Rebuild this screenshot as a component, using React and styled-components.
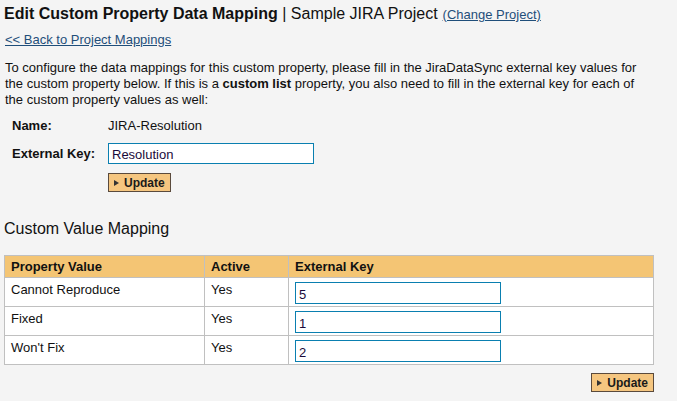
import React from 'react';
import styled, { createGlobalStyle } from 'styled-components';

const GlobalStyle = createGlobalStyle`
  body {
    margin: 0;
    background: #f4f4f4;
    font-family: Arial, "Liberation Sans", sans-serif;
    color: #111;
  }
`;

const Page = styled.div`
  padding: 3px 24px 0 4px;
  font-size: 13px;
`;

const Title = styled.h1`
  margin: 0;
  font-size: 16px;
  font-weight: normal;
  line-height: 22px;
  b {
    font-weight: bold;
  }
`;

const SmallLink = styled.a`
  font-size: 13px;
  color: #1f4e7a;
  margin-left: 5px;
  text-decoration: underline;
`;

const BackLink = styled.a`
  display: inline-block;
  margin-top: 6px;
  font-size: 13px;
  color: #1f4e7a;
  text-decoration: underline;
  margin-left: 1px;
`;

const Intro = styled.p`
  margin: 13px 0 0 1px;
  line-height: 16px;
  color: #111;
  b {
    font-weight: bold;
  }
`;

const Form = styled.div`
  display: grid;
  grid-template-columns: 96px auto;
  row-gap: 9px;
  padding-left: 8px;
  margin-top: 10px;
  align-items: start;
`;

const Label = styled.div`
  font-weight: bold;
  line-height: 16px;
  padding-top: ${p => (p.$input ? '3px' : '0')};
`;

const Value = styled.div`
  line-height: 16px;
`;

const Input = styled.input`
  box-sizing: border-box;
  width: ${p => p.$w || 206}px;
  height: ${p => p.$h || 21}px;
  border: 1px solid #0a7fb0;
  background: #fff;
  font-family: Arial, "Liberation Sans", sans-serif;
  font-size: 13px;
  color: #1a0a3a;
  padding: 2px 3px 0;
  outline: none;
`;

const Button = styled.button`
  box-sizing: border-box;
  display: inline-flex;
  align-items: center;
  gap: 5px;
  height: 19px;
  padding: 0 5px 0 5px;
  background: #f5c680;
  border: 1px solid #5a4a3c;
  font-family: Arial, "Liberation Sans", sans-serif;
  font-weight: bold;
  font-size: 12px;
  color: #1a1a1a;
  cursor: pointer;
  &::before {
    content: '';
    border-left: 5px solid #333;
    border-top: 3px solid transparent;
    border-bottom: 3px solid transparent;
  }
`;

const SectionTitle = styled.h2`
  margin: 27px 0 0;
  font-size: 16px;
  font-weight: normal;
  line-height: 20px;
`;

const Table = styled.table`
  margin-top: 16px;
  width: 650px;
  border-collapse: collapse;
  border: 1px solid #c0c0c0;
  background: #fff;
  th {
    background: #f4c574;
    text-align: left;
    font-weight: bold;
    height: 21px;
    padding: 0 6px;
    border: 1px solid #c0c0c0;
  }
  td {
    vertical-align: top;
    height: 29px;
    padding: 4px 6px 0;
    box-sizing: border-box;
    border: 1px solid #c0c0c0;
    line-height: 16px;
  }
`;

const Footer = styled.div`
  width: 650px;
  display: flex;
  justify-content: flex-end;
  margin-top: 8px;
`;

const rows = [
  { name: 'Cannot Reproduce', active: 'Yes', key: '5' },
  { name: 'Fixed', active: 'Yes', key: '1' },
  { name: "Won't Fix", active: 'Yes', key: '2' },
];

export default function App() {
  return (
    <Page>
      <GlobalStyle />
      <Title>
        <b>Edit Custom Property Data Mapping</b> | Sample JIRA Project
        <SmallLink href="#">(Change Project)</SmallLink>
      </Title>
      <BackLink href="#">&lt;&lt; Back to Project Mappings</BackLink>
      <Intro>
        To configure the data mappings for this custom property, please fill in the JiraDataSync external key values for
        the custom property below. If this is a <b>custom list</b> property, you also need to fill in the external key for each of
        the custom property values as well:
      </Intro>
      <Form>
        <Label>Name:</Label>
        <Value>JIRA-Resolution</Value>
        <Label $input>External Key:</Label>
        <div><Input defaultValue="Resolution" /></div>
        <div />
        <div><Button>Update</Button></div>
      </Form>
      <SectionTitle>Custom Value Mapping</SectionTitle>
      <Table>
        <thead>
          <tr>
            <th style={{ width: 187 }}>Property Value</th>
            <th style={{ width: 71 }}>Active</th>
            <th>External Key</th>
          </tr>
        </thead>
        <tbody>
          {rows.map(r => (
            <tr key={r.name}>
              <td>{r.name}</td>
              <td>{r.active}</td>
              <td><Input $w={206} $h={22} defaultValue={r.key} /></td>
            </tr>
          ))}
        </tbody>
      </Table>
      <Footer>
        <Button>Update</Button>
      </Footer>
    </Page>
  );
}
